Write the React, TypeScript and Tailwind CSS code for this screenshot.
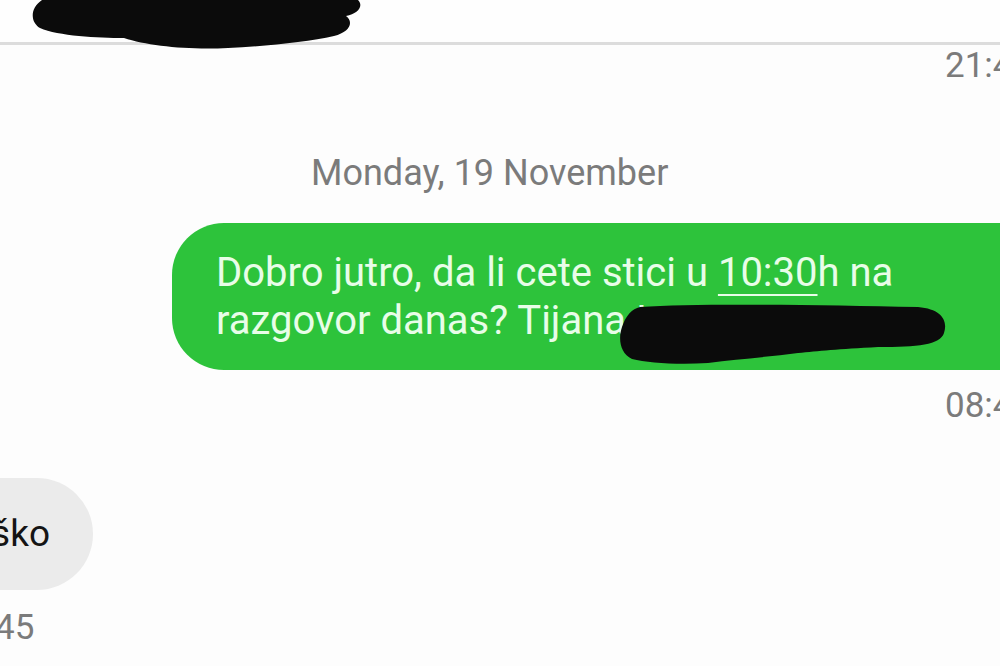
export default function App() {
  return (
    <div className="relative w-[1000px] h-[666px] overflow-hidden bg-[#fdfdfd] font-['Roboto','Liberation_Sans',sans-serif]">
      {/* header strip */}
      <div className="h-[42px] bg-[#fefefe]" />
      <div className="h-[3px] bg-[#dcdcdc]" />

      <svg
        className="absolute left-[28px] top-0"
        width="335"
        height="52"
        viewBox="0 0 335 52"
      >
        <path
          d="M14 0 L330 0 C336 6 330 14 318 16 C326 22 322 32 306 36 C280 42 240 46 200 48 C160 50 120 46 96 38 C70 38 30 36 12 28 C2 22 2 8 14 0 Z"
          fill="#0b0b0b"
        />
      </svg>

      <div className="mt-[1px] pl-[945px] whitespace-nowrap text-[35px] leading-[40px] text-[#7b7b7b]">
        21:45
      </div>

      <div className="mt-[67px] pl-[311px] whitespace-nowrap text-[36px] leading-[40px] text-[#7b7b7b]">
        Monday, 19 November
      </div>

      <div className="relative mt-[30px] ml-[172px] w-[880px] h-[147px] rounded-l-[52px] bg-[#2dc33b] pl-[44px] pt-[26px]">
        <p className="whitespace-nowrap text-[40px] leading-[48px] text-[#e8fde8]">
          Dobro jutro, da li cete stici u{" "}
          <span className="underline decoration-2 underline-offset-[8px]">10:30</span>h na
          <br />
          razgovor danas? Tijana I
        </p>
        <svg
          className="absolute left-[446px] top-[80px]"
          width="330"
          height="62"
          viewBox="0 0 330 62"
        >
          <path
            d="M22 4 C80 0 200 2 300 4 C324 6 330 18 326 30 C322 42 300 44 260 44 C220 46 200 48 180 50 C150 54 120 56 90 60 C60 62 30 60 14 56 C2 50 0 36 4 24 C8 12 14 6 22 4 Z"
            fill="#0b0b0b"
          />
        </svg>
      </div>

      <div className="mt-[16px] pl-[945px] whitespace-nowrap text-[35px] leading-[40px] text-[#7b7b7b]">
        08:45
      </div>

      <div className="mt-[52px] -ml-[60px] flex h-[112px] w-[153px] items-center justify-end rounded-r-[56px] bg-[#ebebeb] pr-[43px]">
        <span className="text-[37px] leading-[40px] text-[#141414]">ško</span>
      </div>

      <div className="mt-[18px] -ml-[5px] whitespace-nowrap text-[35px] leading-[40px] text-[#7b7b7b]">
        45
      </div>
    </div>
  );
}
